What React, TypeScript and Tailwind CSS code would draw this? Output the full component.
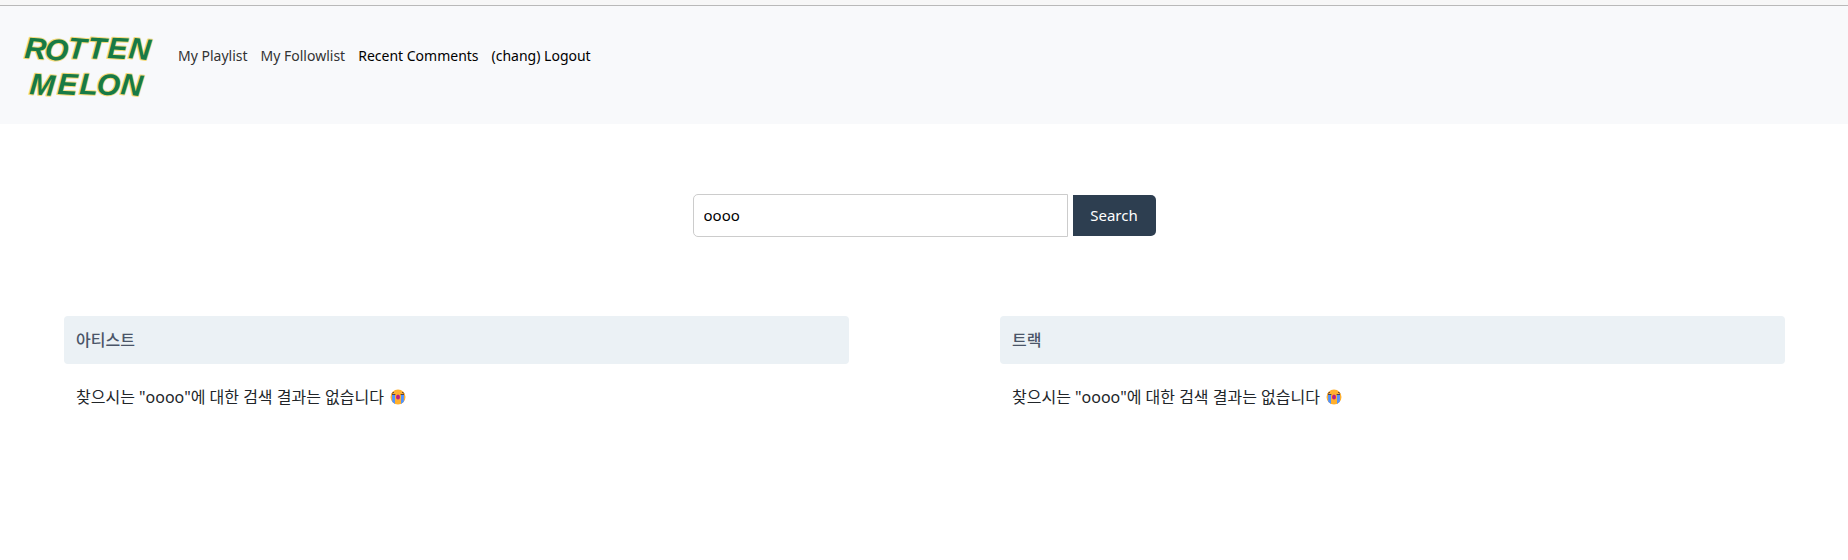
import { useState } from 'react'
import type { FormEvent } from 'react'

const NAV_ITEMS = [
  { href: '#playlist', label: 'My Playlist', color: 'text-[#333333]' },
  { href: '#followlist', label: 'My Followlist', color: 'text-[#333333]' },
  { href: '#comments', label: 'Recent Comments', color: 'text-black' },
  { href: '#logout', label: '(chang) Logout', color: 'text-black' },
]

const SECTIONS = [
  { id: 'artist', title: '아티스트' },
  { id: 'track', title: '트랙' },
]

// letters are tilted one by one for the hand-brushed look
function Logo() {
  return (
    <svg
      viewBox="0 0 140 80"
      className="h-20 w-[140px]"
      fontFamily='"Liberation Sans", sans-serif'
      fontSize="30"
      fontWeight="700"
      fontStyle="italic"
      fill="#177a45"
      stroke="#f5dc7c"
      strokeWidth="2"
      strokeLinejoin="round"
      paintOrder="stroke"
    >
      <text x="4 24 47 67 87 108" y="32 33 32 32 32 32" rotate="4 6 5 4 3 6">ROTTEN</text>
      <text x="9 37 59 76 100" y="68" rotate="5 3 3 5 6">MELON</text>
    </svg>
  )
}

function CryingFace() {
  return (
    <svg viewBox="0 0 16 16" className="ml-1.5 h-4 w-4" role="img" aria-label="😭">
      <circle cx="8" cy="8" r="7.5" fill="#ffb02e" />
      <path d="M2 5.5h3v9.4L2.2 12.8zM11 5.5h3l-.2 7.3L11 14.9z" fill="#5092ff" />
      <path d="M1.8 4.4 4 3.2M14.2 4.4 12 3.2M2 5.5h3.4M10.6 5.5H14" stroke="#402a32" strokeWidth=".8" fill="none" />
      <ellipse cx="8" cy="8" rx="2" ry="2.6" fill="#bb1d80" />
    </svg>
  )
}

function ResultSection({ id, title, keyword }: { id: string; title: string; keyword: string }) {
  return (
    <section aria-labelledby={id}>
      <h2 id={id} className="h-12 rounded bg-[#ebf1f5] px-3 text-base leading-[48px] font-medium text-[#4a5568]">
        {title}
      </h2>
      <p className="mt-[19px] flex items-center px-3 text-base leading-7 text-[#212529]">
        <span>찾으시는 "{keyword}"에 대한 검색 결과는 없습니다</span>
        <CryingFace />
      </p>
    </section>
  )
}

export default function App() {
  const [query, setQuery] = useState('oooo')
  const [keyword, setKeyword] = useState('oooo')

  function handleSubmit(e: FormEvent) {
    e.preventDefault()
    setKeyword(query)
  }

  return (
    <div className="min-h-screen bg-white font-['Noto_Sans','Noto_Sans_CJK_KR',sans-serif]">
      <header className="border-t-5 border-[#f7f7f7] bg-[#f8f9fb]">
        <div className="flex items-start border-t border-[#b9b9b9] px-5 pt-5 pb-[18px]">
          <a href="#home" aria-label="Rotten Melon" className="block">
            <Logo />
          </a>
          <nav className="ml-[18px] flex gap-[13px] pt-5">
            {NAV_ITEMS.map(({ href, label, color }) => (
              <a key={href} href={href} className={`text-sm leading-5 ${color}`}>
                {label}
              </a>
            ))}
          </nav>
        </div>
      </header>

      <main>
        <form onSubmit={handleSubmit} className="mt-[70px] flex items-center justify-center gap-[5px]">
          <input
            type="text"
            aria-label="Search"
            value={query}
            onChange={(e) => setQuery(e.target.value)}
            className="h-[43px] w-[375px] rounded-l-[5px] border border-[#cccccc] bg-white px-[10px] pb-0.5 text-[15px] text-black outline-none"
          />
          <button type="submit" className="h-[41px] w-[83px] rounded-r-[5px] bg-[#2d3e50] text-[15px] text-white">
            Search
          </button>
        </form>

        <div className="mt-[79px] grid grid-cols-2 gap-[151px] pr-[63px] pl-16">
          {SECTIONS.map(({ id, title }) => (
            <ResultSection key={id} id={id} title={title} keyword={keyword} />
          ))}
        </div>
      </main>
    </div>
  )
}
